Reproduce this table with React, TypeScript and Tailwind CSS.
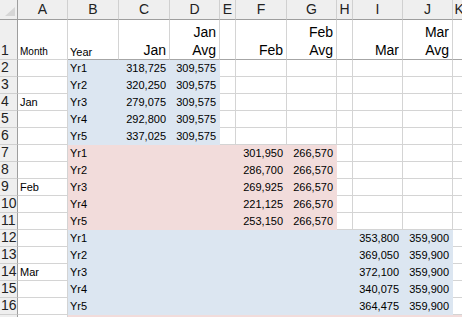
type Fill = 'blue' | 'pink' | undefined;

type Col = { key: string; w: string };

const COLS: Col[] = [
    { key: 'A', w: 'w-[50px]' },
    { key: 'B', w: 'w-[51px]' },
    { key: 'C', w: 'w-[51px]' },
    { key: 'D', w: 'w-[50px]' },
    { key: 'E', w: 'w-[16px]' },
    { key: 'F', w: 'w-[51px]' },
    { key: 'G', w: 'w-[50px]' },
    { key: 'H', w: 'w-[16px]' },
    { key: 'I', w: 'w-[50px]' },
    { key: 'J', w: 'w-[50px]' },
    { key: 'K', w: 'w-[13px]' },
];

// each month block: which columns are shaded and where the values go
const BLOCKS = [
    {
        month: 'Jan',
        fill: 'blue' as Fill,
        shade: ['B', 'C', 'D'],
        valCol: 'C',
        avgCol: 'D',
        vals: ['318,725', '320,250', '279,075', '292,800', '337,025'],
        avg: '309,575',
    },
    {
        month: 'Feb',
        fill: 'pink' as Fill,
        shade: ['B', 'C', 'D', 'E', 'F', 'G'],
        valCol: 'F',
        avgCol: 'G',
        vals: ['301,950', '286,700', '269,925', '221,125', '253,150'],
        avg: '266,570',
    },
    {
        month: 'Mar',
        fill: 'blue' as Fill,
        shade: ['B', 'C', 'D', 'E', 'F', 'G', 'H', 'I', 'J'],
        valCol: 'I',
        avgCol: 'J',
        vals: ['353,800', '369,050', '372,100', '340,075', '364,475'],
        avg: '359,900',
    },
];

type Cell = { text?: string; fill?: Fill; right?: boolean };

function fillClass(fill: Fill) {
    if (fill === 'blue') return 'bg-[#dce6f1] border-[#dce6f1]';
    if (fill === 'pink') return 'bg-[#f2dcdb] border-[#f2dcdb]';
    return 'bg-white border-[#d4d4d4]';
}

function buildRows() {
    const rows: Record<string, Cell>[] = [];
    BLOCKS.forEach((b) => {
        b.vals.forEach((v, i) => {
            const row: Record<string, Cell> = {};
            COLS.forEach((c) => {
                row[c.key] = { fill: b.shade.includes(c.key) ? b.fill : undefined };
            });
            if (i === 2) row.A.text = b.month;
            row.B.text = `Yr${i + 1}`;
            row[b.valCol] = { ...row[b.valCol], text: v, right: true };
            row[b.avgCol] = { ...row[b.avgCol], text: b.avg, right: true };
            rows.push(row);
        });
    });
    // row 17, only its top edge shows
    const last: Record<string, Cell> = {};
    COLS.forEach((c) => {
        last[c.key] = { fill: c.key === 'A' ? undefined : 'pink' };
    });
    rows.push(last);
    return rows;
}

const HEAD: Record<string, string[]> = {
    C: ['Jan'],
    D: ['Jan', 'Avg'],
    F: ['Feb'],
    G: ['Feb', 'Avg'],
    I: ['Mar'],
    J: ['Mar', 'Avg'],
};

function RowNum({ n, tall, hidden }: { n: number; tall?: boolean; hidden?: boolean }) {
    return (
        <div
            className={`w-[18px] shrink-0 ${tall ? 'h-[40px]' : 'h-[17px]'} bg-[#efefef] border-r border-r-[#9e9e9e] border-b border-b-[#d0d0d0] flex items-end pl-[1px] text-[14px] leading-[17px] text-[#222]`}
        >
            {hidden ? '' : n}
        </div>
    );
}

export default function App() {
    const rows = buildRows();

    return (
        <div
            className="w-[462px] h-[317px] overflow-hidden bg-white text-black"
            style={{ fontFamily: '"Liberation Sans", Arial, sans-serif' }}
        >
            {/* column letters */}
            <div className="flex h-[20px]">
                <div className="w-[18px] shrink-0 bg-[#efefef] border-r border-r-[#9e9e9e] border-b border-b-[#9e9e9e] relative">
                    <svg width="17" height="19" className="absolute left-0 top-0">
                        <polygon points="15,7 15,16 5,16" fill="#d6d6d6" />
                    </svg>
                </div>
                {COLS.map((c) => (
                    <div
                        key={c.key}
                        className={`${c.w} shrink-0 bg-[#efefef] border-r border-r-[#d0d0d0] border-b border-b-[#9e9e9e] text-center text-[14px] leading-[19px] text-[#222] overflow-hidden`}
                    >
                        {c.key === 'K' ? <span className="inline-block w-[9px] overflow-hidden text-left">K</span> : c.key}
                    </div>
                ))}
            </div>

            {/* row 1: headings */}
            <div className="flex h-[40px]">
                <RowNum n={1} tall />
                {COLS.map((c) => {
                    const lines = HEAD[c.key];
                    const border = c.key === 'A' ? 'border-b-[#d4d4d4]' : 'border-b-[#a6a6a6]';
                    return (
                        <div
                            key={c.key}
                            className={`${c.w} shrink-0 h-[40px] border-r border-r-[#d4d4d4] border-b ${border} flex flex-col justify-end overflow-hidden`}
                        >
                            {c.key === 'A' && <span className="pl-[2px] text-[10px] leading-[14px]">Month</span>}
                            {c.key === 'B' && <span className="pl-[2px] text-[11px] leading-[14px]">Year</span>}
                            {lines &&
                                lines.map((l) => (
                                    <span key={l} className="pr-[3px] text-right text-[14px] leading-[18px]">
                                        {l}
                                    </span>
                                ))}
                        </div>
                    );
                })}
            </div>

            {/* data rows */}
            {rows.map((row, i) => (
                <div key={i} className="flex h-[17px]">
                    <RowNum n={i + 2} hidden={i === rows.length - 1} />
                    {COLS.map((c) => {
                        const cell = row[c.key];
                        return (
                            <div
                                key={c.key}
                                className={`${c.w} shrink-0 h-[17px] border-r border-b ${fillClass(cell.fill)} text-[11px] leading-[16px] whitespace-nowrap overflow-hidden ${cell.right ? 'text-right pr-[3px]' : 'pl-[2px]'} ${c.key === 'A' ? 'text-[10px]' : ''}`}
                            >
                                {cell.text}
                            </div>
                        );
                    })}
                </div>
            ))}
        </div>
    );
}
